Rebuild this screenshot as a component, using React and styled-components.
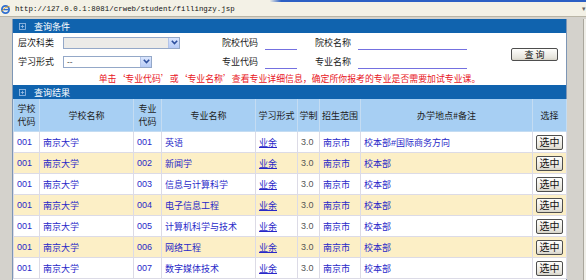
import React from 'react';
import styled, { createGlobalStyle } from 'styled-components';

const GlobalStyle = createGlobalStyle`
    html, body {
        margin: 0;
        padding: 0;
        width: 586px;
        height: 280px;
        overflow: hidden;
        background: #d4d2cc;
        font-family: "Liberation Sans", "Noto Sans CJK SC", sans-serif;
    }
`;

const rows = [
    ['001', '英语', '校本部#国际商务方向'],
    ['002', '新闻学', '校本部'],
    ['003', '信息与计算科学', '校本部'],
    ['004', '电子信息工程', '校本部'],
    ['005', '计算机科学与技术', '校本部'],
    ['006', '网络工程', '校本部'],
    ['007', '数字媒体技术', '校本部'],
];

const columns = [26, 94, 28, 94, 42, 22, 41, 172, 34];

const Chevron = () => (
    <svg width="7" height="5" viewBox="0 0 7 5">
        <path d="M0.8 0.8 L3.5 3.6 L6.2 0.8" fill="none" stroke="#2d4f9e" strokeWidth="1.6" />
    </svg>
);

const PlusBox = () => (
    <svg width="7" height="7" viewBox="0 0 7 7">
        <rect x="0.5" y="0.5" width="6" height="6" fill="none" stroke="#9fc0e6" strokeWidth="0.8" />
        <path d="M1.8 3.5 H5.2 M3.5 1.8 V5.2" stroke="#9fc0e6" strokeWidth="0.8" />
    </svg>
);

const IeIcon = () => (
    <svg width="9" height="9" viewBox="0 0 9 9">
        <circle cx="4.5" cy="4.5" r="3.6" fill="none" stroke="#2f6fd0" strokeWidth="1.8" />
        <path d="M1.5 4.6 H7.6" stroke="#2f6fd0" strokeWidth="1.4" />
        <path d="M0.5 6.5 Q4 1 8.6 1.4" fill="none" stroke="#e0a020" strokeWidth="0.9" />
    </svg>
);

const FakeSelect = ({ width, value, grey }) => (
    <Select $width={width} $grey={grey}>
        <SelectValue>{value}</SelectValue>
        <SelectArrow><Chevron /></SelectArrow>
    </Select>
);

const App = () => {
    return (
        <Window>
            <GlobalStyle />
            <TopEdge />
            <AddressBar>
                <IeIcon />
                <Url>http://127.0.0.1:8081/crweb/student/fillingzy.jsp</Url>
                <DropMark>▾</DropMark>
            </AddressBar>
            <Body>
                <Gutter />
                <Panel>
                    <SectionHeader><PlusBox />查询条件</SectionHeader>
                    <Form>
                        <Label>层次科类</Label>
                        <FakeSelect width={117} value="" grey />
                        <Label>院校代码</Label>
                        <LineInput $width={32} />
                        <Label>院校名称</Label>
                        <LineInput $width={109} />
                        <SearchCell><Button $width={47}>查 询</Button></SearchCell>
                        <Label>学习形式</Label>
                        <FakeSelect width={89} value="--" />
                        <Label>专业代码</Label>
                        <LineInput $width={32} />
                        <Label>专业名称</Label>
                        <LineInput $width={109} />
                    </Form>
                    <Notice>单击‘专业代码’或‘专业名称’查看专业详细信息，确定所你报考的专业是否需要加试专业课。</Notice>
                    <SectionHeader><PlusBox />查询结果</SectionHeader>
                    <Table>
                        <colgroup>
                            {columns.map((w, i) => <col key={i} style={{ width: w }} />)}
                        </colgroup>
                        <thead>
                            <tr>
                                <HeadCell>学校<br />代码</HeadCell>
                                <HeadCell>学校名称</HeadCell>
                                <HeadCell>专业<br />代码</HeadCell>
                                <HeadCell>专业名称</HeadCell>
                                <HeadCell>学习形式</HeadCell>
                                <HeadCell>学制</HeadCell>
                                <HeadCell>招生范围</HeadCell>
                                <HeadCell>办学地点#备注</HeadCell>
                                <HeadCell>选择</HeadCell>
                            </tr>
                        </thead>
                        <tbody>
                            {rows.map(([code, name, place], i) => (
                                <Row key={code} $alt={i % 2 === 1}>
                                    <Cell><Link>001</Link></Cell>
                                    <Cell><Link>南京大学</Link></Cell>
                                    <Cell><Link>{code}</Link></Cell>
                                    <Cell><Link>{name}</Link></Cell>
                                    <Cell><Link $underline>业余</Link></Cell>
                                    <Cell $muted>3.0</Cell>
                                    <Cell><Link>南京市</Link></Cell>
                                    <Cell><Link>{place}</Link></Cell>
                                    <Cell $center><Button $width={27} $pick>选中</Button></Cell>
                                </Row>
                            ))}
                        </tbody>
                    </Table>
                </Panel>
                <Gap />
                <Scrollbar />
            </Body>
        </Window>
    );
};

export default App;

const Window = styled.div`
    width: 586px;
    height: 280px;
    display: flex;
    flex-direction: column;
    overflow: hidden;
`;

const TopEdge = styled.div`
    height: 2px;
    background: linear-gradient(to right, #f3f1e6 46%, #2b5fc4 48%);
`;

const AddressBar = styled.div`
    height: 14px;
    display: flex;
    align-items: center;
    gap: 5px;
    padding-left: 1px;
    background: #f3f1e6;
    border-bottom: 1px solid #b9b5a6;
`;

const Url = styled.span`
    flex: 1;
    font-family: "Liberation Mono", monospace;
    font-size: 7.4px;
    color: #111;
    letter-spacing: 0.05px;
`;

const DropMark = styled.span`
    width: 4px;
    font-size: 7px;
    color: #666;
`;

const Body = styled.div`
    flex: 1;
    display: flex;
    padding-top: 2px;
    min-height: 0;
`;

const Gutter = styled.div`
    width: 12px;
    flex-shrink: 0;
`;

const Gap = styled.div`
    width: 16px;
    flex-shrink: 0;
`;

const Scrollbar = styled.div`
    width: 3px;
    flex-shrink: 0;
    background: #efeee8;
    border-left: 1px solid #a9a69c;
`;

const Panel = styled.div`
    width: 553px;
    flex-shrink: 0;
    background: #fff;
    border-left: 1px solid #7d96b5;
    border-right: 1px solid #7d96b5;
    display: flex;
    flex-direction: column;
`;

const SectionHeader = styled.div`
    height: 14px;
    display: flex;
    align-items: center;
    gap: 8px;
    padding-left: 6px;
    background: #1063ae;
    color: #fff;
    font-family: "Noto Sans CJK SC", sans-serif;
    font-size: 9px;
`;

const Form = styled.div`
    display: grid;
    grid-template-columns: 45px 159px 43px 50px 43px 153px 47px;
    grid-template-rows: 19px 19px;
    align-items: center;
    padding-left: 5px;
    font-family: "Noto Sans CJK SC", sans-serif;
    font-size: 9px;
    color: #1a1a1a;
`;

const Label = styled.span`
    line-height: 12px;
`;

const Select = styled.div`
    width: ${p => p.$width}px;
    height: 12px;
    box-sizing: border-box;
    display: flex;
    border: 1px solid #94a8c8;
    background: ${p => p.$grey ? '#ecebe8' : '#fff'};
`;

const SelectValue = styled.span`
    flex: 1;
    padding-left: 3px;
    font-size: 8px;
    line-height: 10px;
    color: #222;
`;

const SelectArrow = styled.span`
    width: 10px;
    display: flex;
    align-items: center;
    justify-content: center;
    background: linear-gradient(#dbe6fd, #b7cbf6);
    border-left: 1px solid #b3c4e8;
`;

const LineInput = styled.span`
    display: block;
    width: ${p => p.$width}px;
    height: 12px;
    margin-top: 1px;
    border-bottom: 1px solid #7470e0;
`;

const SearchCell = styled.div`
    grid-column: 7;
    grid-row: 1 / span 2;
    align-self: center;
    padding-top: 4px;
`;

const Button = styled.span`
    display: inline-flex;
    align-items: center;
    justify-content: center;
    width: ${p => p.$width}px;
    height: ${p => p.$pick ? 15 : 13}px;
    box-sizing: border-box;
    border: 1px solid #4e4e4e;
    border-radius: 2px;
    background: linear-gradient(#fefefc, #e6e4dc 80%, #d6d3c8);
    color: #111;
    font-family: "Noto Sans CJK SC", sans-serif;
    font-size: ${p => p.$pick ? 10 : 9}px;
    line-height: 1;
    white-space: pre;
`;

const Notice = styled.div`
    height: 13px;
    line-height: 13px;
    margin-top: 1px;
    text-align: center;
    color: #e8141c;
    font-family: "Noto Sans CJK SC", sans-serif;
    font-size: 8.9px;
    white-space: nowrap;
`;

const Table = styled.table`
    width: 553px;
    table-layout: fixed;
    border-collapse: collapse;
    font-size: 9px;
`;

const HeadCell = styled.th`
    height: 32px;
    padding: 0 1px;
    background: #a7cff3;
    border: 1px solid #c4dcf2;
    border-top: none;
    font-weight: normal;
    font-family: "Noto Sans CJK SC", sans-serif;
    line-height: 13px;
    color: #1d1d1d;
    text-align: center;
`;

const Row = styled.tr`
    background: ${p => p.$alt ? '#fcefc6' : '#fff'};
`;

const Cell = styled.td`
    height: 20px;
    padding: 0 0 0 3px;
    border: 1px solid #dcdbe6;
    white-space: nowrap;
    overflow: hidden;
    text-align: ${p => p.$center ? 'center' : 'left'};
    color: ${p => p.$muted ? '#555' : '#222'};
    ${p => p.$center && 'padding: 0;'}
`;

const Link = styled.span`
    color: #2828c8;
    text-decoration: ${p => p.$underline ? 'underline' : 'none'};
`;
